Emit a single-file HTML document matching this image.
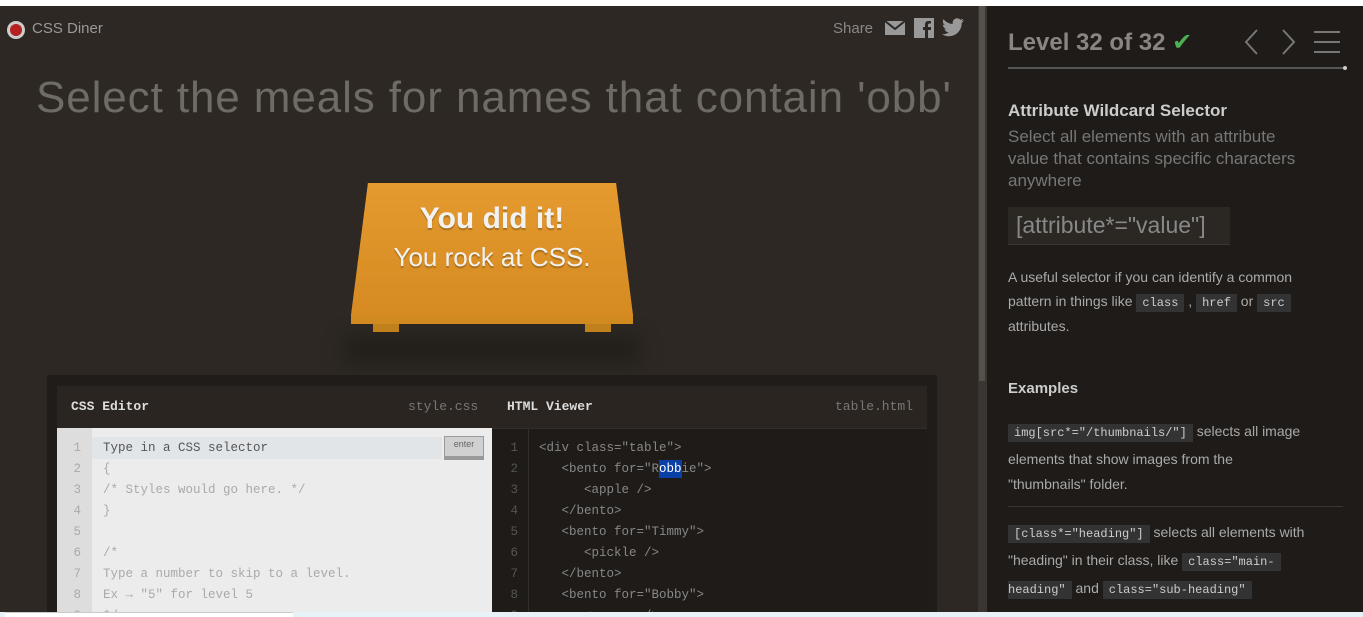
<!DOCTYPE html>
<html style="overflow:hidden;width:1363px;height:617px"><head><meta charset="utf-8"><style>
*{margin:0;padding:0;box-sizing:border-box}
body{width:1363px;height:617px;overflow:hidden;background:#fff;font-family:"Liberation Sans","DejaVu Sans",sans-serif;position:relative}
.left{position:absolute;left:0;top:6px;width:978px;height:611px;background:#2d2823;overflow:hidden}
.sb{position:absolute;left:978px;top:6px;width:9px;height:611px;background:#3a3530}
.sbt{position:absolute;left:979px;top:6px;width:6px;height:375px;background:#55504a}
.right{position:absolute;left:987px;top:6px;width:376px;height:611px;background:#1e1b18;color:#aaa;overflow:hidden}
.a{position:absolute}
.mono{font-family:"Liberation Mono","DejaVu Sans Mono",monospace}
code{font-family:"Liberation Mono",monospace;background:#333;color:#ccc;font-size:12px;padding:2px 6px}
.ln{position:absolute;font-family:"Liberation Mono",monospace;font-size:12.5px;line-height:21px}
</style></head><body>
<div class="left">
 <div class="a" style="left:7px;top:15px;width:18px;height:18px;border-radius:50%;background:#ccc"></div>
 <div class="a" style="left:10px;top:18px;width:12px;height:12px;border-radius:50%;background:#b52020"></div>
 <div class="a" style="left:32px;top:14px;color:#999;font-size:15px">CSS Diner</div>
 <div class="a" style="left:833px;top:14px;color:#888;font-size:15px">Share</div>
 <svg class="a" style="left:885px;top:14px" width="20" height="16"><rect x="0" y="1" width="20" height="14" fill="#999"/><path d="M0 1L10 9L20 1" stroke="#2d2823" stroke-width="2" fill="none"/></svg>
 <svg class="a" style="left:914px;top:12px" width="20" height="20"><rect width="20" height="20" fill="#999"/><path d="M14 20V12h3v-3h-3V7c0-1 .5-1.5 1.5-1.5H17V3h-2.5C12 3 11 4.5 11 7v2H9v3h2v8z" fill="#2d2823"/></svg>
 <svg class="a" style="left:941px;top:12px" width="24" height="20" viewBox="0 0 24 20"><path d="M23 2.5c-.8.4-1.7.6-2.6.7.9-.6 1.6-1.4 2-2.5-.9.5-1.900.9-2.9 1.1A4.5 4.5 0 0 0 11.8 6 12.8 12.8 0 0 1 2.5 1.2a4.5 4.5 0 0 0 1.4 6 4.4 4.4 0 0 1-2-.6c0 2.2 1.5 4 3.6 4.4-.7.2-1.4.2-2 .1.6 1.8 2.2 3.1 4.2 3.1A9 9 0 0 1 1 16.2 12.8 12.8 0 0 0 7.9 18.2c8.3 0 12.8-6.9 12.8-12.8v-.6c.9-.6 1.7-1.4 2.3-2.3z" fill="#999"/></svg>
 <div class="a" style="left:36px;top:67px;color:#6e6a65;font-size:44px;letter-spacing:0.9px;white-space:nowrap">Select the meals for names that contain 'obb'</div>
 <div class="a" style="left:344px;top:330px;width:296px;height:28px;background:rgba(0,0,0,.25);filter:blur(10px)"></div>
 <div class="a" style="left:373px;top:312px;width:26px;height:14px;background:#c0801c"></div>
 <div class="a" style="left:585px;top:312px;width:26px;height:14px;background:#c0801c"></div>
 <div class="a" style="left:351px;top:308px;width:282px;height:10px;background:#d08a20"></div>
 <div class="a" style="left:351px;top:177px;width:282px;height:132px;background:linear-gradient(#e49a2e,#d68b22);clip-path:polygon(6% 0,94% 0,100% 100%,0 100%)"></div>
 <div class="a" style="left:351px;top:196px;width:282px;text-align:center;color:#f2f2f2;font-weight:bold;font-size:30px;text-shadow:0 2px 1px rgba(0,0,0,.25)">You did it!</div>
 <div class="a" style="left:351px;top:236px;width:282px;text-align:center;color:#f2f2f2;font-size:26px;text-shadow:0 2px 1px rgba(0,0,0,.25)">You rock at CSS.</div>
 <div class="a" style="left:47px;top:369px;width:890px;height:250px;background:#1f1c19"></div>
 <div class="a" style="left:57px;top:380px;width:435px;height:42px;background:#2a2520"></div>
 <div class="a mono" style="left:71px;top:393px;color:#ddd;font-size:13px;font-weight:bold">CSS Editor</div>
 <div class="a mono" style="left:408px;top:393px;color:#777;font-size:13px">style.css</div>
 <div class="a" style="left:57px;top:422px;width:435px;height:200px;background:#ececec"></div>
 <div class="a" style="left:57px;top:422px;width:35px;height:200px;background:#ddd"></div>
 <div class="a" style="left:92px;top:431px;width:350px;height:22px;background:#e2e5e8"></div>
 <div class="a" style="left:444px;top:430px;width:40px;height:24px;background:#d0d0d0;border:1px solid #999;border-bottom:4px solid #999;font-size:9px;color:#666;text-align:center;line-height:15px" >enter</div>
 <div class="ln" style="left:69px;top:432px;color:#aaa;text-align:right;width:12px">1<br>2<br>3<br>4<br>5<br>6<br>7<br>8<br>9</div>
 <div class="ln" style="left:103px;top:432px;color:#aaa;white-space:pre"><span style="color:#555">Type in a CSS selector</span>
{
/* Styles would go here. */
}

/*
Type a number to skip to a level.
Ex → "5" for level 5
*/</div>
 <div class="a" style="left:492px;top:380px;width:435px;height:42px;background:#2a2520"></div>
 <div class="a mono" style="left:507px;top:393px;color:#ddd;font-size:13px;font-weight:bold">HTML Viewer</div>
 <div class="a mono" style="left:835px;top:393px;color:#777;font-size:13px">table.html</div>
 <div class="a" style="left:492px;top:422px;width:435px;height:200px;background:#1e1b18;border-top:1px solid #332e29"></div>
 <div class="a" style="left:528px;top:422px;width:1px;height:200px;background:#332e29"></div>
 <div class="ln" style="left:506px;top:432px;color:#555;text-align:right;width:12px">1<br>2<br>3<br>4<br>5<br>6<br>7<br>8<br>9</div>
 <div class="ln" style="left:539px;top:432px;color:#888;white-space:pre">&lt;div class="table"&gt;
   &lt;bento for="R<span style="color:#fff;background:#0b3fa8;padding:2px 0">obb</span>ie"&gt;
      &lt;apple /&gt;
   &lt;/bento&gt;
   &lt;bento for="Timmy"&gt;
      &lt;pickle /&gt;
   &lt;/bento&gt;
   &lt;bento for="Bobby"&gt;
      &lt;orange /&gt;</div>
</div>
<div class="sb"></div><div class="sbt"></div>
<div class="right">
 <div class="a" style="left:21px;top:22px;color:#8a8580;font-size:24px;font-weight:bold">Level 32 of 32 <span style="color:#4caf50">✔</span></div>
 <svg class="a" style="left:256px;top:22px" width="110" height="28"><path d="M14 2L3 14L14 26" stroke="#777" stroke-width="2" fill="none"/><path d="M40 2L51 14L40 26" stroke="#777" stroke-width="2" fill="none"/><path d="M71 4h26M71 14h26M71 24h26" stroke="#777" stroke-width="2"/></svg>
 <div class="a" style="left:21px;top:61px;width:336px;height:2px;background:#555"></div>
 <div class="a" style="left:356px;top:60px;width:4px;height:4px;border-radius:50%;background:#ccc"></div>
 <div class="a" style="left:21px;top:95px;color:#ccc;font-size:17px;font-weight:bold">Attribute Wildcard Selector</div>
 <div class="a" style="left:21px;top:120px;width:330px;color:#777;font-size:17px;line-height:22px">Select all elements with an attribute<br>value that contains specific characters<br>anywhere</div>
 <div class="a" style="left:21px;top:201px;width:222px;height:38px;background:#2b2824;border-bottom:1px solid #3a3530;color:#888;font-size:23px;padding:5px 8px;white-space:nowrap">[attribute*="value"]</div>
 <div class="a" style="left:21px;top:260px;width:340px;color:#aaa;font-size:14px;line-height:23.5px">A useful selector if you can identify a common<br>pattern in things like <code>class</code> , <code>href</code> or <code>src</code><br>attributes.</div>
 <div class="a" style="left:21px;top:374px;color:#ccc;font-size:15px;font-weight:bold">Examples</div>
 <div class="a" style="left:21px;top:413px;width:340px;color:#aaa;font-size:14px;line-height:25.5px"><code>img[src*="/thumbnails/"]</code> selects all image<br>elements that show images from the<br>"thumbnails" folder.</div>
 <div class="a" style="left:21px;top:500px;width:335px;height:1px;background:#3a3530"></div>
 <div class="a" style="left:21px;top:513px;width:350px;color:#aaa;font-size:14px;line-height:26px"><code>[class*="heading"]</code> selects all elements with<br>"heading" in their class, like <code>class="main-</code><br><code style="padding-left:0">heading"</code> and <code>class="sub-heading"</code></div>
</div>
<div class="a" style="left:0;top:612px;width:1363px;height:5px;background:#e6f2f7"></div>
<div class="a" style="left:5px;top:612px;width:288px;height:5px;background:#fff;border-top:1px solid #ccc"></div>
</body></html>
